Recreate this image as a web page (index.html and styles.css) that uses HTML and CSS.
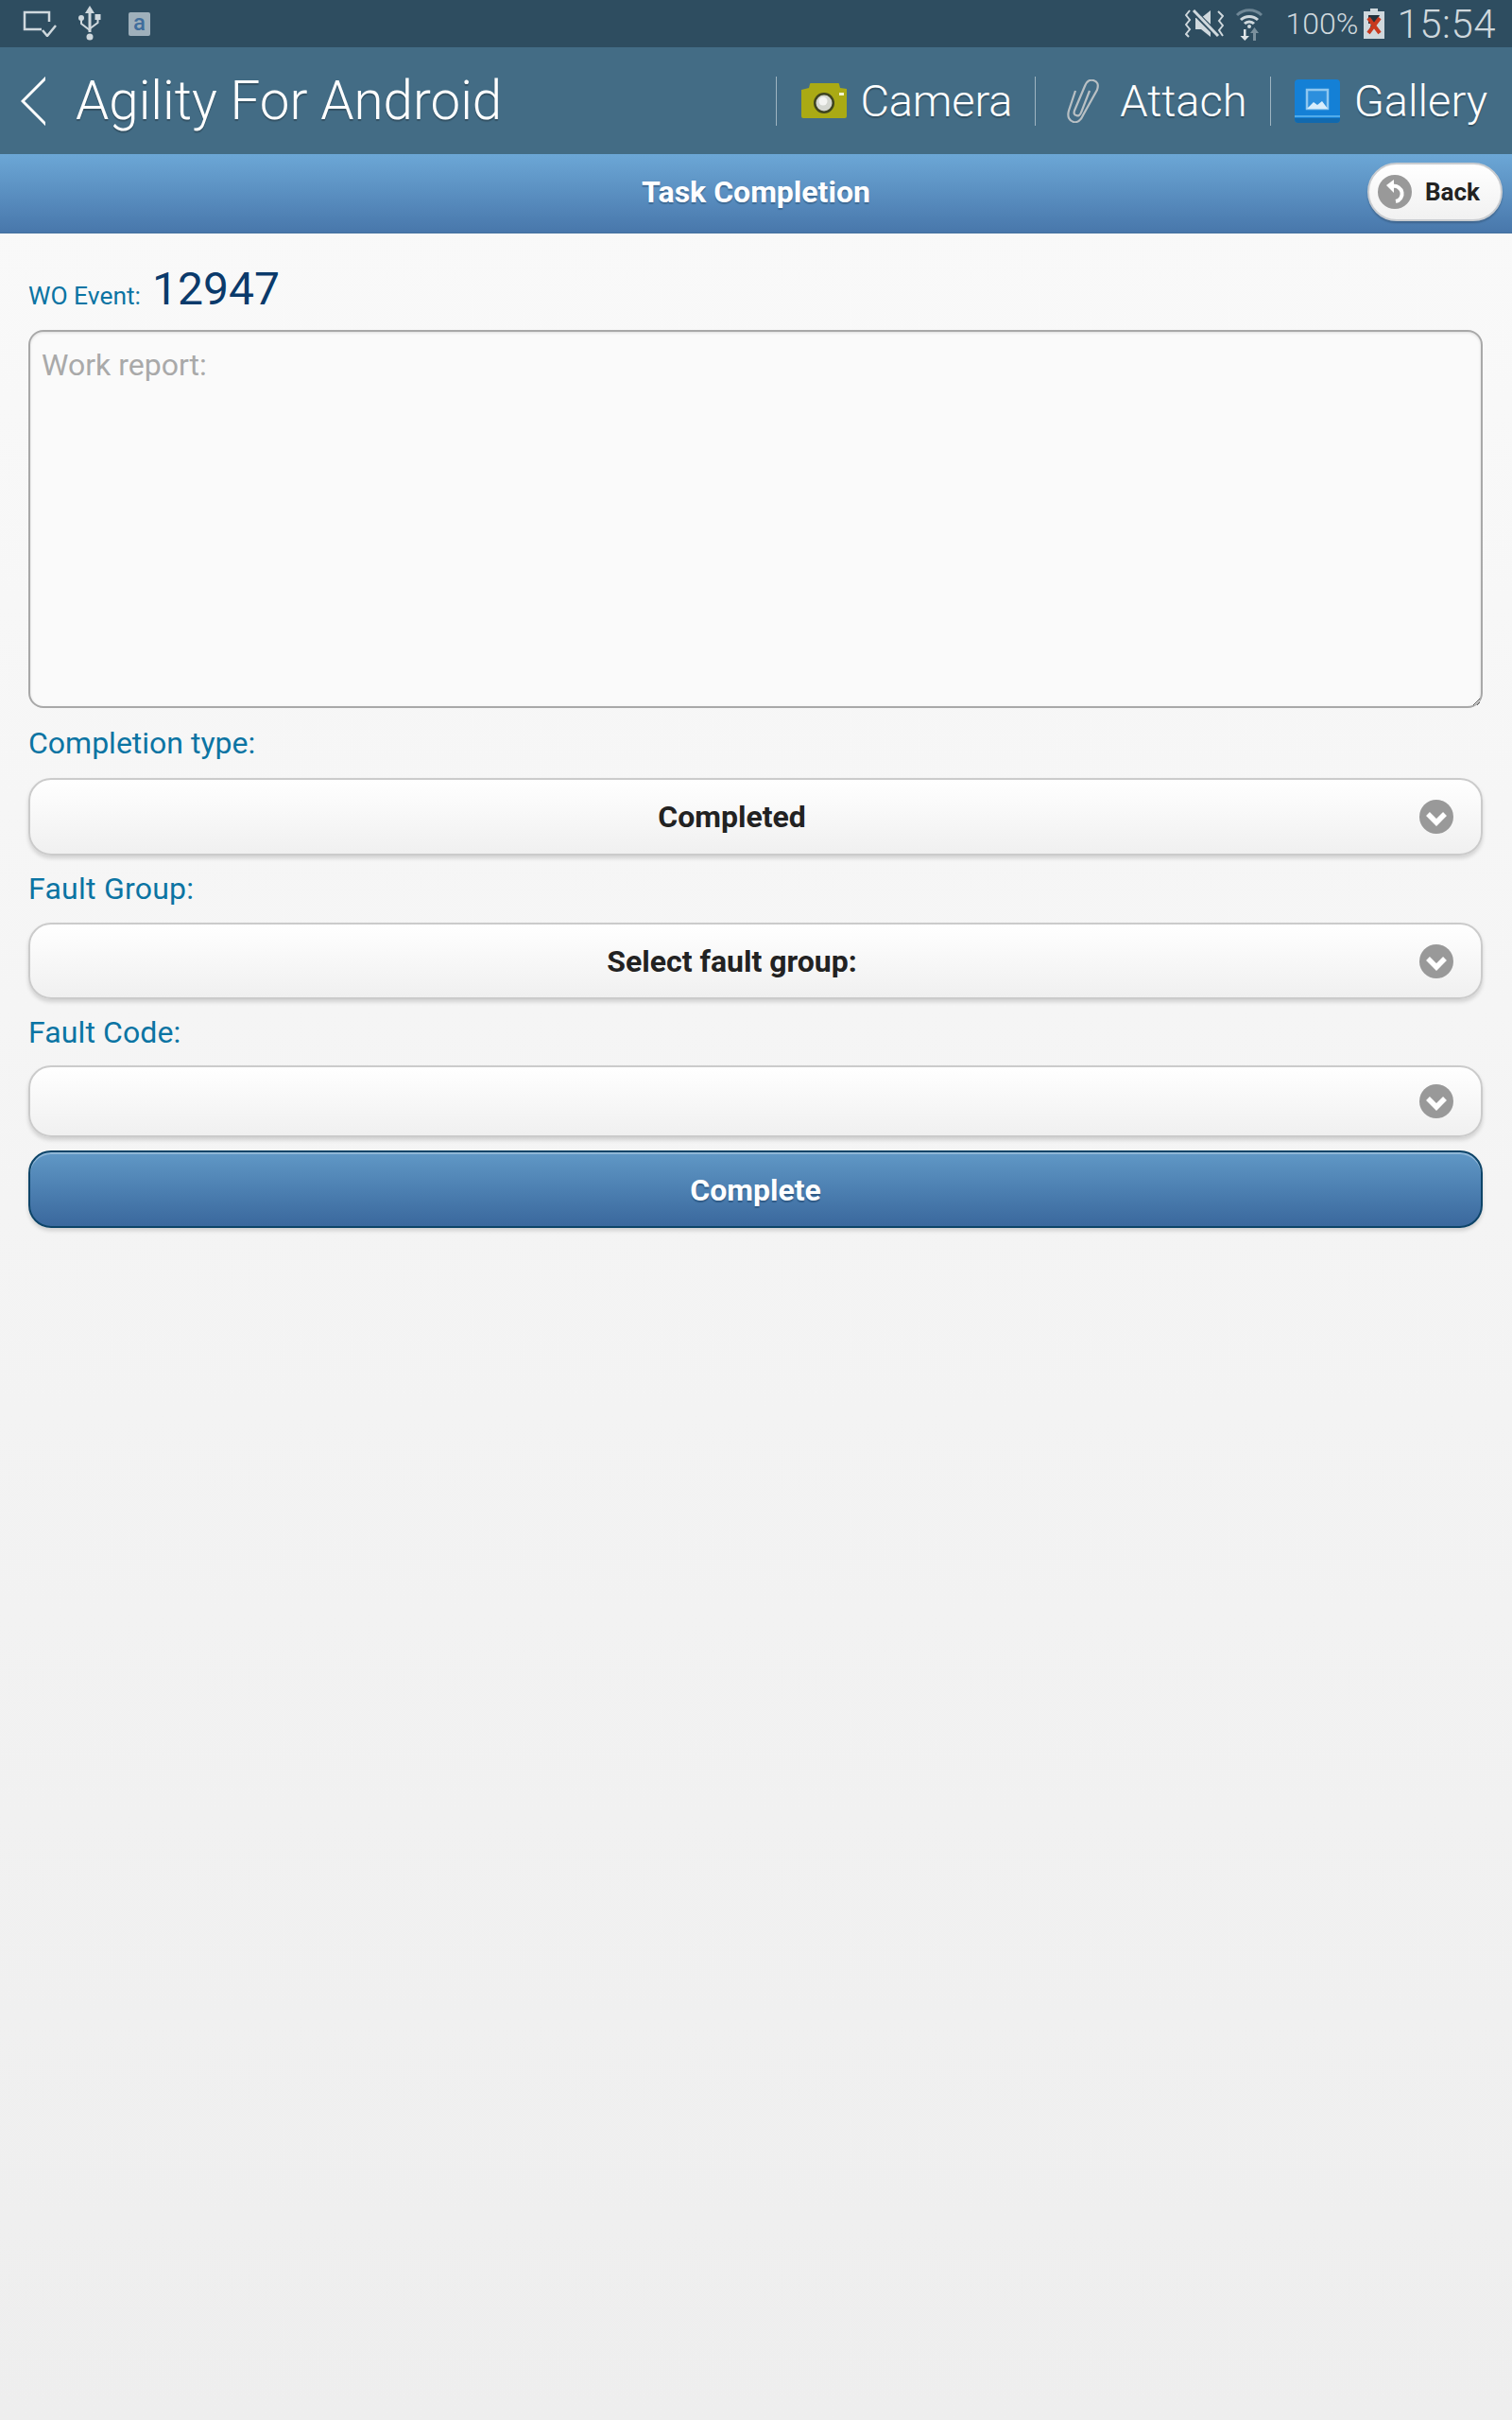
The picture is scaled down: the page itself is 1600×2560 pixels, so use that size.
FILE: index.html
```html
<!DOCTYPE html>
<html lang="en">
<head>
    <meta charset="UTF-8">
    <title>Agility For Android</title>
    <link rel="stylesheet" href="styles.css">
</head>
<body>
    <div class="status-bar">
        <div class="status-left">
            <svg class="icon-cast" width="38" height="28" viewBox="0 0 38 28">
                <path d="M28 12V2H2V20H20" fill="none" stroke="#cfd8dd" stroke-width="2.5"/>
                <path d="M21 21l5 6 9-11" fill="none" stroke="#cfd8dd" stroke-width="2.5"/>
            </svg>
            <svg class="icon-usb" width="26" height="38" viewBox="0 0 26 38">
                <path d="M13 0l5 8h-3.500v20h-3V8H8z" fill="#cfd8dd"/>
                <circle cx="13" cy="33" r="3.500" fill="#cfd8dd"/>
                <circle cx="4" cy="13" r="3" fill="#cfd8dd"/>
                <rect x="18.500" y="9" width="6" height="6" fill="#cfd8dd"/>
                <path d="M4 14v5l9 7M21.500 14v4l-8 6" fill="none" stroke="#cfd8dd" stroke-width="2"/>
            </svg>
            <span class="icon-a">a</span>
        </div>
        <div class="status-right">
            <svg class="icon-mute" width="41" height="30" viewBox="0 0 41 30">
                <path d="M11 9h6l10-8v28l-10-8h-6z" fill="#cfd8dd"/>
                <path d="M7 0l30 30" stroke="#2e4d60" stroke-width="6"/>
                <path d="M9 1l26 27" stroke="#cfd8dd" stroke-width="3"/>
                <path d="M5 1L1 6l4 5-4 5 4 5-4 5 3 3M35 2l5 5-4 5 4 5-4 5 4 6" fill="none" stroke="#cfd8dd" stroke-width="2"/>
            </svg>
            <svg class="icon-wifi" width="30" height="36" viewBox="0 0 30 36">
                <path d="M2 9a19 19 0 0 1 26 0" fill="none" stroke="#6f8796" stroke-width="3"/>
                <path d="M6 14a13 13 0 0 1 18 0M10 18a7 7 0 0 1 10 0" fill="none" stroke="#cfd8dd" stroke-width="3"/>
                <circle cx="15" cy="21" r="2" fill="#cfd8dd"/>
                <path d="M9 24h2.500v7H15l-4.700 5-4.800-5H9z" fill="#dfe5e8"/>
                <path d="M19 36v-8h-3l4.500-6 4.500 6h-3v8z" fill="#7b909d"/>
            </svg>
            <span class="battery-pct">100%</span>
            <svg class="icon-battery" width="22" height="32" viewBox="0 0 22 32">
                <path d="M7 0h8v3h7v29H0V3h7z" fill="#cfd8dd"/>
                <path d="M5 7h12l-3 6h3L6 24l2-8H5z" fill="#22323c"/>
                <path d="M5 10l12 16M17 10L5 26" stroke="#c8391f" stroke-width="4"/>
            </svg>
            <span class="clock">15:54</span>
        </div>
    </div>

    <div class="action-bar">
        <div class="app-title">
            <svg class="icon-up" width="26" height="52" viewBox="0 0 26 52">
                <path d="M28 0L2 26l26 26" fill="none" stroke="#fff" stroke-width="3"/>
            </svg>
            <span>Agility For Android</span>
        </div>
        <div class="actions">
            <div class="action action-camera">
                <svg width="48" height="37" viewBox="0 0 48 37">
                    <path d="M0 7l8-2 1-4q0-1 1-1h29q1 0 1 1l1 4 7 1v29q0 2-2 2H2q-2 0-2-2z" fill="#aaaa14"/>
                    <circle cx="24" cy="21" r="11" fill="#3f4420"/>
                    <circle cx="24" cy="21" r="8.500" fill="#d4d6d0"/>
                    <circle cx="23" cy="19" r="4.500" fill="#f4f4f2"/>
                    <rect x="40" y="10" width="5" height="3" fill="#f2f4d0"/>
                </svg>
                <span>Camera</span>
            </div>
            <div class="action action-attach">
                <svg width="36" height="46" viewBox="0 0 36 46">
                    <path d="M10 12L3 33c-2 7 1 11 5 12 4 1 8-2 10-7L33 11c2-6 0-9-4-10-4-1-7 1-9 6L9 33c-1 3 0 5 2 5 2 1 4 0 5-3l9-23" fill="none" stroke="#b9c0c4" stroke-width="2.200"/>
                </svg>
                <span>Attach</span>
            </div>
            <div class="action action-gallery">
                <svg width="48" height="46" viewBox="0 0 48 46">
                    <rect width="48" height="46" rx="4" fill="#1480d6"/>
                    <path d="M0 41h48v1q0 4-4 4H4q-4 0-4-4z" fill="#1169ae"/>
                    <rect y="38" width="48" height="2" fill="#4fabea"/>
                    <path d="M13 11h22v20H13z" fill="#2c8fdd" stroke="#8ec7f0" stroke-width="2.500"/>
                    <path d="M13 31l7-7 4 3 5-4 6 8z" fill="#d8edfb"/>
                </svg>
                <span>Gallery</span>
            </div>
        </div>
    </div>

    <div class="page-header">
        <h1>Task Completion</h1>
        <div class="back-btn">
            <svg width="36" height="36" viewBox="0 0 36 36">
                <circle cx="18" cy="18" r="18" fill="#999"/>
                <path d="M14 12h2a8 8 0 0 1 3 16" fill="none" stroke="#fff" stroke-width="4"/>
                <path d="M17 5v14l-8-8z" fill="#fff"/>
            </svg>
            <span>Back</span>
        </div>
    </div>

    <div class="content">
        <div class="wo-event">
            <span class="wo-label">WO Event:</span>
            <span class="wo-number">12947</span>
        </div>
        <textarea class="work-report" placeholder="Work report:"></textarea>

        <label class="field-label label-first">Completion type:</label>
        <div class="select select-first">
            <span>Completed</span>
            <svg class="chevron" width="36" height="36" viewBox="0 0 36 36">
                <circle cx="18" cy="18" r="18" fill="#999"/>
                <path d="M9 15l9 9 9-9" fill="none" stroke="#fff" stroke-width="5.500"/>
            </svg>
        </div>

        <label class="field-label label-group">Fault Group:</label>
        <div class="select select-second">
            <span>Select fault group:</span>
            <svg class="chevron" width="36" height="36" viewBox="0 0 36 36">
                <circle cx="18" cy="18" r="18" fill="#999"/>
                <path d="M9 15l9 9 9-9" fill="none" stroke="#fff" stroke-width="5.500"/>
            </svg>
        </div>

        <label class="field-label label-code">Fault Code:</label>
        <div class="select select-third">
            <span></span>
            <svg class="chevron" width="36" height="36" viewBox="0 0 36 36">
                <circle cx="18" cy="18" r="18" fill="#999"/>
                <path d="M9 15l9 9 9-9" fill="none" stroke="#fff" stroke-width="5.500"/>
            </svg>
        </div>

        <div class="complete-btn">Complete</div>
    </div>
</body>
</html>
```

FILE: styles.css
```css
* {
    margin: 0;
    padding: 0;
    box-sizing: border-box;
}

html, body {
    height: 2560px;
    overflow: hidden;
}

body {
    font-family: Roboto, 'Noto Sans', sans-serif;
    background: linear-gradient(180deg, #fafafa 0%, #eeeeee 100%);
}

svg {
    display: block;
    flex: none;
}

/* status bar */
.status-bar {
    height: 50px;
    background: #2e4d60;
    display: flex;
    justify-content: space-between;
    align-items: center;
    padding: 0 17px 0 24px;
    color: #cfd8dd;
}

.status-left {
    display: flex;
    align-items: center;
}

.icon-usb {
    margin-left: 20px;
}

.icon-a {
    width: 23px;
    height: 25px;
    margin-left: 28px;
    background: #9fb0bb;
    border-radius: 2px;
    color: #3f6d9c;
    font-size: 24px;
    font-weight: 500;
    line-height: 23px;
    text-align: center;
}

.status-right {
    display: flex;
    align-items: center;
}

.icon-wifi {
    margin-left: 12px;
}

.battery-pct {
    font-size: 32px;
    font-weight: 300;
    margin-left: 24px;
}

.icon-battery {
    margin-left: 6px;
}

.clock {
    font-size: 42px;
    font-weight: 300;
    margin-left: 13px;
    letter-spacing: 0.5px;
}

/* action bar */
.action-bar {
    height: 113px;
    background: #436c85;
    display: flex;
    justify-content: space-between;
    align-items: center;
    color: #fff;
    padding-right: 26px;
    text-shadow: 0 2px 1px rgba(0, 0, 0, 0.25);
}

.app-title {
    display: flex;
    align-items: center;
    padding-left: 22px;
    font-size: 56.5px;
    font-weight: 300;
}

.app-title span {
    margin-left: 32px;
}

.actions {
    display: flex;
    align-items: center;
}

.action {
    display: flex;
    align-items: center;
    height: 52px;
    border-left: 1px solid #9fb4c1;
    font-size: 47px;
    font-weight: 300;
}

.action-camera {
    padding-left: 26px;
    padding-right: 24px;
}

.action-camera span {
    margin-left: 15px;
    letter-spacing: -0.2px;
}

.action-attach {
    padding-left: 32px;
    padding-right: 24px;
}

.action-attach span {
    margin-left: 21px;
}

.action-gallery {
    padding-left: 25px;
}

.action-gallery span {
    margin-left: 15px;
}

/* page header */
.page-header {
    position: relative;
    height: 84px;
    padding-bottom: 4px;
    background: linear-gradient(180deg, #6ca7d6 0%, #4877ab 100%);
    border-bottom: 1px solid #44719f;
    display: flex;
    align-items: center;
    justify-content: center;
}

.page-header h1 {
    color: #fff;
    font-size: 32px;
    font-weight: 700;
    text-shadow: 0 2px 1px #3f6b95;
}

.back-btn {
    position: absolute;
    top: 9px;
    right: 10px;
    width: 143px;
    height: 62px;
    display: flex;
    align-items: center;
    padding-left: 9px;
    gap: 14px;
    background: linear-gradient(180deg, #ffffff 0%, #f1f1f1 100%);
    border: 2px solid #c9ccd0;
    border-radius: 32px;
    box-shadow: 0 2px 2px rgba(0, 0, 0, 0.2);
    color: #222;
    font-size: 26px;
    font-weight: 700;
}

/* form */
.content {
    padding: 30px 31px 0 30px;
    display: flex;
    flex-direction: column;
}

.wo-event {
    height: 72px;
    display: flex;
    align-items: baseline;
}

.wo-label {
    color: #0b74a3;
    font-size: 26.4px;
}

.wo-number {
    color: #0a3a6b;
    font-size: 48px;
    margin-left: 12px;
}

.work-report {
    width: 100%;
    height: 400px;
    background: #fafafa;
    border: 2px solid #a8a8a8;
    border-radius: 16px;
    padding: 16px 12px;
    font-family: Roboto, sans-serif;
    font-size: 32px;
    outline: none;
    box-shadow: inset 0 1px 3px rgba(0, 0, 0, 0.12);
}

.work-report::placeholder {
    color: #a9a9a9;
}

.field-label {
    display: block;
    color: #0b74a3;
    font-size: 32px;
    height: 36px;
    line-height: 36px;
    margin-top: 17px;
    margin-bottom: 19px;
}

.label-first {
    margin-top: 19px;
}

.label-group {
    margin-bottom: 18px;
    letter-spacing: 0.25px;
}

.label-code {
    margin-bottom: 17px;
    letter-spacing: 0.1px;
}

.select {
    position: relative;
    height: 81px;
    display: flex;
    align-items: center;
    justify-content: center;
    padding-right: 50px;
    background: linear-gradient(180deg, #ffffff 0%, #f0f0f0 100%);
    border: 2px solid #cbcbcb;
    border-radius: 24px;
    box-shadow: 0 3px 4px rgba(0, 0, 0, 0.15);
    color: #222;
    font-size: 32px;
    font-weight: 700;
}

.select-first {
    height: 82px;
}

.select-third {
    height: 76px;
}

.chevron {
    position: absolute;
    right: 29px;
    top: 50%;
    margin-top: -18px;
}

.complete-btn {
    height: 82px;
    margin-top: 14px;
    padding-top: 2px;
    display: flex;
    align-items: center;
    justify-content: center;
    background: linear-gradient(180deg, #6098c6 0%, #3a689d 100%);
    border: 2px solid #0d4468;
    border-radius: 24px;
    box-shadow: inset 0 2px 0 rgba(255, 255, 255, 0.3), 0 3px 4px rgba(0, 0, 0, 0.15);
    color: #fff;
    font-size: 32px;
    font-weight: 700;
    text-shadow: 0 2px 1px #2f5a86;
}
```
